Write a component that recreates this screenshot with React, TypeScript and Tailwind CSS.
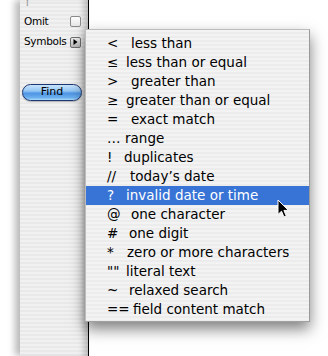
import React from "react";

type Item = { sym: string; text: string; w: string; hi?: boolean };

const items: Item[] = [
  { sym: "<", text: "less than", w: "w-[24px]" },
  { sym: "≤", text: "less than or equal", w: "w-[19px]" },
  { sym: ">", text: "greater than", w: "w-[24px]" },
  { sym: "≥", text: "greater than or equal", w: "w-[19px]" },
  { sym: "=", text: "exact match", w: "w-[24px]" },
  { sym: "…", text: "range", w: "w-[18px]" },
  { sym: "!", text: "duplicates", w: "w-[17px]" },
  { sym: "//", text: "today’s date", w: "w-[23px]" },
  { sym: "?", text: "invalid date or time", w: "w-[19px]", hi: true },
  { sym: "@", text: "one character", w: "w-[24px]" },
  { sym: "#", text: "one digit", w: "w-[22px]" },
  { sym: "*", text: "zero or more characters", w: "w-[20px]" },
  { sym: "\"\"", text: "literal text", w: "w-[19px]" },
  { sym: "~", text: "relaxed search", w: "w-[22px]" },
  { sym: "==", text: "field content match", w: "w-[26px]" },
];

export default function App() {
  return (
    <div className="relative w-[328px] h-[356px] overflow-hidden bg-white flex font-['DejaVu_Sans',sans-serif]">
      <div className="w-[20px] flex-none" />
      {/* drawer panel */}
      <div className="w-[68px] h-full flex-none flex flex-col pl-[4px] text-black bg-[repeating-linear-gradient(180deg,#f1f1f1_0px,#f1f1f1_2px,#e9e9e9_2px,#e9e9e9_4px)] shadow-[-5px_0_7px_rgba(0,0,0,0.28),inset_-7px_0_6px_-3px_rgba(0,0,0,0.22)]">
        <div className="h-[11px] pl-[2px] text-[8px] leading-[7px] text-[#8a8a8a] font-['Liberation_Serif',serif]">I</div>
        <div className="h-[21px] flex items-center justify-between pr-[7px] text-[10.5px] tracking-[-0.3px]">
          <span>Omit</span>
          <div className="w-[11px] h-[11px] rounded-[2px] border border-[#8a8a8a] bg-[linear-gradient(180deg,#fdfdfd,#e6e6e6)]" />
        </div>
        <div className="h-[20px] flex items-center justify-between pr-[7px] text-[10.5px] tracking-[-0.3px]">
          <span>Symbols</span>
          <div className="w-[11px] h-[11px] rounded-[2px] border border-[#6e6e6e] bg-[linear-gradient(180deg,#eeeeee,#b9b9b9)] flex items-center justify-center">
            <svg width="5" height="6" viewBox="0 0 5 6">
              <path d="M0.5 0 L4.5 3 L0.5 6 Z" fill="#000" />
            </svg>
          </div>
        </div>
        <div className="mt-[32px] -ml-[2px] w-[60px] h-[17px] rounded-full border border-[#1c3672] bg-[linear-gradient(180deg,#c9e4fc_0%,#93c6f4_40%,#4f95e4_55%,#6cb0ef_85%,#b0dcfb_100%)] flex items-center justify-center text-[11px] text-black shadow-[0_1px_1px_rgba(0,0,0,0.25)]">
          Find
        </div>
      </div>
      <div className="w-[1px] h-full bg-black flex-none" />
      <div className="flex-1" />

      {/* popup menu */}
      <div className="absolute left-[85px] top-[29px] w-[225px] h-[293px] border border-[#bdbdbd] border-r-[#9a9a9a] border-b-[#a0a0a0] pt-[4px] bg-[repeating-linear-gradient(180deg,#f3f3f3_0px,#f3f3f3_2px,#ececec_2px,#ececec_4px)] shadow-[0_7px_14px_rgba(0,0,0,0.5)] flex flex-col text-[13.5px]">
        {items.map((it, i) => (
          <div
            key={i}
            className={
              it.hi
                ? "h-[19px] flex items-center pl-[21px] bg-[#3873d6] text-white"
                : "h-[19px] flex items-center pl-[21px] text-black"
            }
          >
            <span className={it.w + " flex-none whitespace-pre"}>{it.sym}</span>
            <span className="whitespace-pre">{it.text}</span>
          </div>
        ))}
      </div>

      {/* mouse cursor */}
      <svg className="absolute left-[277px] top-[199px]" width="13" height="20" viewBox="0 0 13 20">
        <path
          d="M1 1 L1 15.5 L4.5 12.2 L7 18 L9.3 17 L6.9 11.4 L11.5 11.4 Z"
          fill="#000"
          stroke="#fff"
          strokeWidth="1"
          strokeLinejoin="round"
        />
      </svg>
    </div>
  );
}
